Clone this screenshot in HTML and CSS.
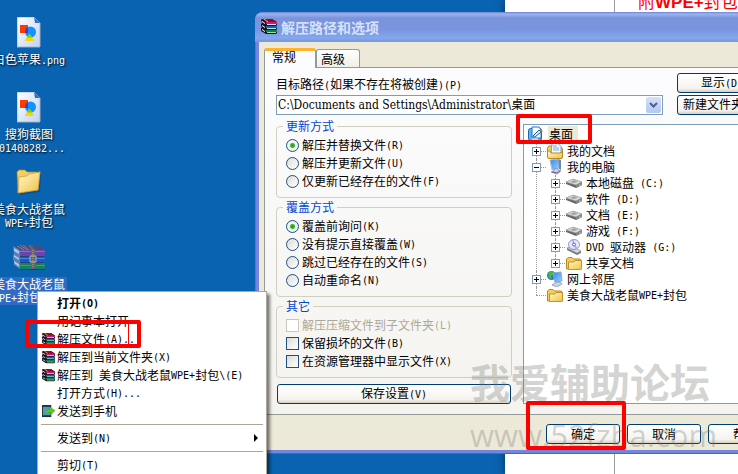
FILE: index.html
```
<!DOCTYPE html>
<html lang="zh-CN">
<head>
    <meta charset="utf-8">
    <meta name="viewport" content="width=device-width, initial-scale=1.0">
    <title>解压路径和选项</title>
    <link rel="stylesheet" href="styles.css">
</head>
<body>

<svg class="defs" aria-hidden="true">
    <defs>
        <linearGradient id="paper" x1="0" y1="0" x2="1" y2="1">
            <stop offset="0" stop-color="#ffffff"/>
            <stop offset="1" stop-color="#bfd3f3"/>
        </linearGradient>
        <linearGradient id="gold" x1="0" y1="0" x2="1" y2="1">
            <stop offset="0" stop-color="#fffbd0"/>
            <stop offset="1" stop-color="#f0c040"/>
        </linearGradient>
        <linearGradient id="screen" x1="0" y1="0" x2="1" y2="1">
            <stop offset="0" stop-color="#2a86f0"/>
            <stop offset="1" stop-color="#9ad4ff"/>
        </linearGradient>
    </defs>
    <symbol id="i-image" viewBox="0 0 24 31">
        <path d="M1 1h16l6 6v23H1z" fill="#0a3d78" opacity=".5" transform="translate(1 1)"/>
        <path d="M0 0h17l6 6v24H0z" fill="url(#paper)" stroke="#9fb6dc"/>
        <path d="M17 0l6 6h-5z" fill="#2f72c4"/>
        <rect x="3" y="8" width="8" height="8" fill="#ff3a00"/>
        <circle cx="13.500" cy="15" r="5.500" fill="#1590ff"/>
        <path d="M8.500 12.500Q9.500 10.500 11 10v6H8.100z" fill="#3a40b8"/>
        <path d="M12.500 16.500l5 7.500h-10z" fill="#ffd500"/>
        <path d="M12.500 16.500l2.700 4h-5.400z" fill="#5ad820"/>
    </symbol>
    <symbol id="i-folder-big" viewBox="0 0 26 26">
        <path d="M3 4h20l2 1-1 18-20 3z" fill="#073f78" opacity=".5"/>
        <path d="M1 3l2-2h6l2 2h10v3l3-4-2 19L2 24z" fill="#f3cf62" stroke="#b08a28" stroke-width=".7"/>
        <path d="M2 24L3 8l8-1 2-2 11-2-2 18z" fill="url(#gold)" stroke="#c09a38" stroke-width=".7"/>
    </symbol>
    <symbol id="i-rar-big" viewBox="0 0 32 25">
        <path d="M0 1l7 4v19l-6-4V16l-1-1V10l1-1z" fill="#5f7fb4"/>
        <path d="M1 0h24l7 5H7z" fill="#4b4c78"/>
        <path d="M1 3l5 3v3L1 6zM1 10l5 3v2l-5-3zM1 16l5 3v3l-5-4z" fill="#a9c8f0"/>
        <path d="M7 5h25v5l-1 1H7z" fill="#6646a6"/>
        <path d="M7 6h25v1H7z" fill="#8e6cc8"/>
        <path d="M7 11h24v2H7z" fill="#2c3f68"/>
        <path d="M7 12h25v5H7z" fill="#1659d2"/>
        <path d="M7 13h25v1H7z" fill="#3f84f0"/>
        <path d="M7 17h24v2H7z" fill="#2e445c"/>
        <path d="M7 18h25v6H7z" fill="#15806a"/>
        <path d="M7 20h25v1H7z" fill="#2aa77c"/>
        <path d="M4 1l7 4M7 0l7 5M10 0l6 5" stroke="#85829a"/>
        <path d="M15 0h3l4 5v19h-4V5z" fill="#66646e"/>
        <path d="M17 11h6v6h-6z" fill="none" stroke="#b0b8c2"/>
        <path d="M20 5v18" stroke="#c0a878" stroke-dasharray="1 1"/>
        <path d="M7 24h25v1H7z" fill="#203d62"/>
    </symbol>
    <symbol id="i-rar" viewBox="0 0 16 16">
        <path d="M0 1l1-1h10l5 3v3l-1 1 1 1v2l-1 1 1 1v2l-1 1H5l-5-3V9l1-1-1-1V5l1-1z" fill="#15151d"/>
        <path d="M1 0h10l4 3H5z" fill="#8c1020"/>
        <path d="M5 3h11v2H5z" fill="#c81c78"/>
        <path d="M6 5h9v1H6z" fill="#f0d8e8"/>
        <path d="M5 7h11v2H5z" fill="#1c5cc0"/>
        <path d="M6 9h9v1H6z" fill="#a0e8f4"/>
        <path d="M5 11h11v2H5z" fill="#108048"/>
        <path d="M6 13h9v1H6z" fill="#90e0a0"/>
        <path d="M1 2l3 2v1L1 3zM1 6l3 2v1L1 7zM1 10l3 2v1l-3-2z" fill="#fff"/>
        <path d="M3 0l4 3" stroke="#d8b64e"/>
    </symbol>
    <symbol id="i-phone" viewBox="0 0 14 14">
        <path d="M0 0h10v13H0z" fill="#20313d"/>
        <path d="M1 2h8v9H1z" fill="#5698cb"/>
        <path d="M3 11c0-5 2-6 5-6V2l6 4-5 5V8c-3 0-4 1-6 3z" fill="#5cc82c" stroke="#369815" stroke-width=".5"/>
    </symbol>
    <symbol id="i-desktop" viewBox="0 0 16 16">
        <rect x=".500" y="2.500" width="13" height="12" rx="2" fill="#60b3f1" stroke="#176bb5"/>
        <path d="M4 1h7l2 3v8H4z" fill="#f5fbff" stroke="#1778ca"/>
        <path d="M5 10l6-6 2 2-6 5H5z" fill="#d9eefc" stroke="#1762a5"/>
        <path d="M12 4l3 1-2 2z" fill="#e66123"/>
        <path d="M4 13h6" stroke="#fff"/>
    </symbol>
    <symbol id="i-docs" viewBox="0 0 16 16">
        <path d="M.500 5l1.500-2h3l1 1h8l1.500 2v8l-1 1.500h-13l-1-1.500z" fill="#f5cf5c" stroke="#b88b20"/>
        <path d="M5 .500h6l3 3V11H4z" fill="#f4faff" stroke="#6f9fd8"/>
        <path d="M6 3h4M6 5h6M6 7h6" stroke="#77aee6"/>
        <path d="M.500 8H3l1 2h9l2.500-1v5l-1 1.500h-13l-1-1.500z" fill="url(#gold)" stroke="#b88b20"/>
    </symbol>
    <symbol id="i-computer" viewBox="0 0 16 16">
        <path d="M3 1l8-1 1 9-7 2z" fill="url(#screen)" stroke="#a8bddb"/>
        <path d="M11 0l3 1v10l-2-1z" fill="#7186bc"/>
        <path d="M7 10l3-1 1 2 3 1-4 3-6-2 3-1z" fill="#c7cfe1" stroke="#7783aa" stroke-width=".7"/>
        <path d="M5 13l5 1 3-2" fill="none" stroke="#6e55a5"/>
    </symbol>
    <symbol id="i-disk" viewBox="0 0 16 16">
        <path d="M0 7l7-3 9 3v3l-6 3-10-4z" fill="#68686c"/>
        <path d="M0 7l7-3 9 3-6 3z" fill="#dcdcdc" stroke="#9a9a9a" stroke-width=".6"/>
        <path d="M4 7l4-2 4 2-4 1z" fill="#a4a4a4"/>
        <path d="M10 10l6-3v3l-6 3z" fill="#85888a"/>
        <path d="M13 10h2" stroke="#a0d090"/>
    </symbol>
    <symbol id="i-dvd" viewBox="0 0 16 16">
        <path d="M1 9l5-2 9 5v2l-4 2-10-5z" fill="#777b83"/>
        <path d="M1 9l5-2 9 5-4 2z" fill="#d7d8db" stroke="#888" stroke-width=".5"/>
        <ellipse cx="8" cy="5.500" rx="5.500" ry="5" fill="#e4e6fa" stroke="#8e9bbb"/>
        <path d="M8 5L5 1l3-1zM8 6l4 3-3 1z" fill="#b9a6ed"/>
        <circle cx="8" cy="5.500" r="1.500" fill="#fff" stroke="#5068c5"/>
    </symbol>
    <symbol id="i-folder" viewBox="0 0 16 16">
        <path d="M.500 4L2 2.500h4L7.500 4H14l1.500 1.500V14H.500z" fill="#f4cc56" stroke="#b88b20"/>
        <path d="M2.500 14.500V7H8l1-1.500h6.500V14l-1 .500z" fill="url(#gold)" stroke="#c3922a"/>
    </symbol>
    <symbol id="i-network" viewBox="0 0 16 16">
        <circle cx="4.500" cy="4.500" r="4.500" fill="#2b74cd"/>
        <path d="M1 2l4-2 2 3-3 2 1 3-3-1z" fill="#49bc37"/>
        <path d="M6 2l8-1 1 9-7 1z" fill="url(#screen)" stroke="#8da9d5"/>
        <path d="M9 11h4l2 2-5 3-5-2z" fill="#cad2e6" stroke="#7e88b1" stroke-width=".7"/>
    </symbol>
</svg>

<div class="desktop">

    <div class="page-window">
        <div class="page-body">附<b>WPE+</b>封包</div>
    </div>

    <ul class="shortcuts">
        <li>
            <span class="pic"><svg width="24" height="31"><use href="#i-image"/></svg></span>
            <span class="name">白色苹果<span class="en">.png</span></span>
        </li>
        <li>
            <span class="pic"><svg width="24" height="31"><use href="#i-image"/></svg></span>
            <span class="name">搜狗截图<br><span class="en">201408282...</span></span>
        </li>
        <li>
            <span class="pic"><svg width="26" height="26"><use href="#i-folder-big"/></svg></span>
            <span class="name">美食大战老鼠<br><span class="en">WPE+</span>封包</span>
        </li>
        <li class="selected">
            <span class="pic"><svg width="32" height="25"><use href="#i-rar-big"/></svg></span>
            <span class="name">美食大战老鼠<br><span class="en">WPE+</span>封包<span class="en">.rar</span></span>
        </li>
    </ul>

    <form class="dialog">
        <div class="titlebar">
            <svg width="16" height="16"><use href="#i-rar"/></svg>
            <h1>解压路径和选项</h1>
        </div>

        <div class="dialog-body">
            <div class="tabs">
                <button type="button" class="tab active">常规</button>
                <button type="button" class="tab">高级</button>
            </div>

            <div class="panel">
                <div class="path-row">
                    <div class="path">
                        <label for="path">目标路径<span class="en">(</span>如果不存在将被创建<span class="en">)(P)</span></label>
                        <div class="combo">
                            <select id="path">
                                <option>C:\Documents and Settings\Administrator\桌面</option>
                            </select>
                            <span class="combo-arrow"><svg width="9" height="6" viewBox="0 0 9 6"><path d="M1 1l3.500 3.500L8 1" fill="none" stroke="#4d6185" stroke-width="2"/></svg></span>
                        </div>
                    </div>
                    <div class="path-buttons">
                        <button type="button" class="btn">显示<span class="en">(D)</span></button>
                        <button type="button" class="btn">新建文件夹<span class="en">(E)</span></button>
                    </div>
                </div>

                <div class="columns">
                    <div class="options">
                        <fieldset>
                            <legend>更新方式</legend>
                            <label><input type="radio" name="update" checked>解压并替换文件<span class="en">(R)</span></label>
                            <label><input type="radio" name="update">解压并更新文件<span class="en">(U)</span></label>
                            <label><input type="radio" name="update">仅更新已经存在的文件<span class="en">(F)</span></label>
                        </fieldset>
                        <fieldset>
                            <legend>覆盖方式</legend>
                            <label><input type="radio" name="overwrite" checked>覆盖前询问<span class="en">(K)</span></label>
                            <label><input type="radio" name="overwrite">没有提示直接覆盖<span class="en">(W)</span></label>
                            <label><input type="radio" name="overwrite">跳过已经存在的文件<span class="en">(S)</span></label>
                            <label><input type="radio" name="overwrite">自动重命名<span class="en">(N)</span></label>
                        </fieldset>
                        <fieldset>
                            <legend>其它</legend>
                            <label class="disabled"><input type="checkbox" disabled>解压压缩文件到子文件夹<span class="en">(L)</span></label>
                            <label><input type="checkbox">保留损坏的文件<span class="en">(B)</span></label>
                            <label><input type="checkbox">在资源管理器中显示文件<span class="en">(X)</span></label>
                        </fieldset>
                        <button type="button" class="btn">保存设置<span class="en">(V)</span></button>
                    </div>

                    <div class="tree">
                        <div class="root"><svg width="16" height="16"><use href="#i-desktop"/></svg><span class="current">桌面</span></div>
                        <ul>
                            <li>
                                <div class="node"><button type="button" class="toggle plus" aria-label="展开"></button><svg width="16" height="16"><use href="#i-docs"/></svg>我的文档</div>
                            </li>
                            <li>
                                <div class="node"><button type="button" class="toggle" aria-label="折叠"></button><svg width="16" height="16"><use href="#i-computer"/></svg>我的电脑</div>
                                <ul>
                                    <li><div class="node"><button type="button" class="toggle plus" aria-label="展开"></button><svg width="16" height="16"><use href="#i-disk"/></svg>本地磁盘<span class="en"> (C:)</span></div></li>
                                    <li><div class="node"><button type="button" class="toggle plus" aria-label="展开"></button><svg width="16" height="16"><use href="#i-disk"/></svg>软件<span class="en"> (D:)</span></div></li>
                                    <li><div class="node"><button type="button" class="toggle plus" aria-label="展开"></button><svg width="16" height="16"><use href="#i-disk"/></svg>文档<span class="en"> (E:)</span></div></li>
                                    <li><div class="node"><button type="button" class="toggle plus" aria-label="展开"></button><svg width="16" height="16"><use href="#i-disk"/></svg>游戏<span class="en"> (F:)</span></div></li>
                                    <li><div class="node"><button type="button" class="toggle plus" aria-label="展开"></button><svg width="16" height="16"><use href="#i-dvd"/></svg><span class="en">DVD </span>驱动器<span class="en"> (G:)</span></div></li>
                                    <li><div class="node"><button type="button" class="toggle plus" aria-label="展开"></button><svg width="16" height="16"><use href="#i-folder"/></svg>共享文档</div></li>
                                </ul>
                            </li>
                            <li>
                                <div class="node"><button type="button" class="toggle plus" aria-label="展开"></button><svg width="16" height="16"><use href="#i-network"/></svg>网上邻居</div>
                            </li>
                            <li>
                                <div class="node leaf"><svg width="16" height="16"><use href="#i-folder"/></svg>美食大战老鼠<span class="en">WPE+</span>封包</div>
                            </li>
                        </ul>
                    </div>
                </div>
            </div>

            <div class="footer">
                <button type="button" class="btn">确定</button>
                <button type="button" class="btn">取消</button>
                <button type="button" class="btn">帮助</button>
            </div>
        </div>
    </form>

    <div class="watermark">
        <div class="wm-name">我爱辅助论坛</div>
        <div class="wm-url">www.52fzba.com</div>
    </div>

    <div class="menu">
        <button type="button" class="default">打开<span class="en">(O)</span></button>
        <button type="button">用记事本打开</button>
        <button type="button"><svg width="13" height="13"><use href="#i-rar"/></svg>解压文件<span class="en">(A)...</span></button>
        <button type="button"><svg width="13" height="13"><use href="#i-rar"/></svg>解压到当前文件夹<span class="en">(X)</span></button>
        <button type="button"><svg width="13" height="13"><use href="#i-rar"/></svg>解压到<span class="en"> </span>美食大战老鼠<span class="en">WPE+</span>封包<span class="en">\(E)</span></button>
        <button type="button">打开方式<span class="en">(H)...</span></button>
        <button type="button"><svg width="13" height="13"><use href="#i-phone"/></svg>发送到手机</button>
        <hr>
        <button type="button" class="submenu">发送到<span class="en">(N)</span></button>
        <hr>
        <button type="button">剪切<span class="en">(T)</span></button>
    </div>

    <div class="mark mark-menu"></div>
    <div class="mark mark-tree"></div>
    <div class="mark mark-ok"></div>

</div>

</body>
</html>
```
FILE: styles.css
```
* {
    box-sizing: border-box;
}

body {
    margin: 0;
    font-family: "Noto Sans CJK SC", sans-serif;
    font-size: 12px;
    line-height: 16px;
    color: #000;
}

ul {
    list-style: none;
    margin: 0;
    padding: 0;
}

svg {
    flex: none;
}

button, select {
    font: inherit;
    color: inherit;
}

.defs {
    position: absolute;
    width: 0;
    height: 0;
}

/* latin text is half the width of a chinese character */
.en {
    padding-top: 2px;
    font-family: "DejaVu Sans Mono", monospace;
    font-size: 10px;
    white-space: pre;
}

.desktop {
    position: relative;
    height: 100vh;
    overflow: hidden;
    background-color: #0963b0;
}

/* browser page behind the dialog */
.page-window {
    position: absolute;
    top: 0;
    bottom: 0;
    left: 505px;
    right: 0;
    padding-left: 109px;
    background-color: #fff;
    box-shadow: 0 0 8px rgba(0, 0, 0, 0.5);
}

.page-body {
    height: 100%;
    padding-left: 23px;
    border-left: 1px solid #999;
    color: #f00;
    font-family: "Liberation Sans", "Noto Sans CJK SC", sans-serif;
    font-size: 17px;
    line-height: 6px;
    white-space: nowrap;
}

/* desktop icons */
.shortcuts {
    position: absolute;
    top: 14px;
    left: -8px;
    width: 74px;
}

.shortcuts li {
    display: flex;
    flex-direction: column;
    align-items: center;
    height: 75px;
    color: #fff;
    text-align: center;
    line-height: 13px;
    text-shadow: 1px 1px 2px #000;
}

.pic {
    display: flex;
    align-items: center;
    height: 36px;
}

.name {
    margin-top: 2px;
    white-space: nowrap;
}

.selected .name {
    padding: 0 2px;
    background-color: #316ac5;
    text-shadow: none;
}

/* dialog */
.dialog {
    position: absolute;
    top: 12px;
    left: 255px;
    right: -65px;
    padding: 0 4px 4px;
    border-radius: 8px 8px 0 0;
    background-color: #7584dc;
    box-shadow: inset 1px 0 #6570c8, inset 0 -1px #5560b8;
}

.titlebar {
    display: flex;
    align-items: center;
    gap: 4px;
    height: 30px;
    margin: 0 -4px;
    padding: 0 6px;
    border-radius: 8px 8px 0 0;
    background: linear-gradient(#6c82d4 0, #9db5ef 2px, #7b93dd 6px, #7a95df 18px, #84a8ec 26px, #7b93dd 30px);
}

.titlebar h1 {
    margin: 0;
    font-size: 14px;
    color: #d5e2fa;
}

.dialog-body {
    padding: 5px 5px 6px;
    background-color: #ece9d8;
}

.tabs {
    display: flex;
    align-items: flex-end;
    height: 20px;
}

.tab {
    width: 44px;
    height: 18px;
    padding: 0 4px;
    border: 1px solid #919b9c;
    border-bottom: 0;
    border-radius: 3px 3px 0 0;
    background: linear-gradient(#fff, #f0efe7);
    text-align: left;
    line-height: 16px;
}

.tab.active {
    position: relative;
    width: 52px;
    height: 20px;
    margin-bottom: -1px;
    padding: 0 7px 5px;
    border-top: 3px solid #ffb32c;
    background: #fcfcfe;
    line-height: 12px;
}

.panel {
    padding: 5px 11px 10px;
    border: 1px solid #919b9c;
    background: linear-gradient(#fcfcfe, #f4f3ee);
}

.path-row {
    display: flex;
    align-items: flex-end;
    gap: 14px;
    padding-right: 15px;
}

.path {
    flex: 1;
}

.path label {
    display: block;
    line-height: 18px;
}

.combo {
    position: relative;
}

.combo select {
    display: block;
    width: 100%;
    height: 20px;
    padding: 0 20px 0 1px;
    border: 1px solid #7f9db9;
    border-radius: 0;
    background-color: #fff;
    appearance: none;
    font-family: "DejaVu Serif Condensed", "Noto Sans CJK SC", serif;
}

.combo-arrow {
    position: absolute;
    top: 2px;
    right: 2px;
    display: flex;
    align-items: center;
    justify-content: center;
    width: 15px;
    height: 16px;
    border-radius: 2px;
    background: linear-gradient(#d4e0fc, #b4c8f4);
    pointer-events: none;
}

.path-buttons {
    display: flex;
    flex-direction: column;
    gap: 2px;
    width: 90px;
}

.btn {
    height: 20px;
    padding: 0;
    border: 1px solid #003c74;
    border-radius: 3px;
    background: linear-gradient(#fff, #f4f3ee 80%, #d6d0c5);
    line-height: 16px;
    white-space: nowrap;
}

.columns {
    display: grid;
    grid-template-columns: 236px 1fr;
    gap: 11px;
    margin-top: 3px;
}

.options {
    display: flex;
    flex-direction: column;
    gap: 1px;
}

fieldset {
    min-width: 0;
    margin: 0;
    padding: 2px 9px 7px;
    border: 1px solid #d0d0bf;
    border-radius: 4px;
}

legend {
    margin-left: -3px;
    padding: 0 3px;
    color: #0046d5;
}

fieldset label {
    display: flex;
    align-items: center;
    height: 18px;
    white-space: nowrap;
}

fieldset input {
    width: 13px;
    height: 13px;
    margin: 0 3px 0 0;
    border: 1px solid #1c5180;
    background: linear-gradient(135deg, #dcdcd7, #fff);
    appearance: none;
}

fieldset input[type="radio"] {
    border-radius: 50%;
}

fieldset input[type="radio"]:checked {
    background: radial-gradient(circle, #21a121 0, #35b535 2px, #f1f1ed 3px);
}

.disabled {
    color: #aca899;
}

.disabled input {
    border-color: #cac8bb;
    background: #fff;
}

.options .btn {
    margin: 5px 1px 0;
}

/* folder tree */
.tree {
    margin-top: 6px;
    border: 1px solid #7f9db9;
    background-color: #fff;
    white-space: nowrap;
}

.root {
    display: flex;
    align-items: center;
    gap: 4px;
    height: 18px;
    padding-left: 4px;
}

.current {
    padding: 0 5px 0 1px;
    background-color: #ece9d8;
}

.node {
    position: relative;
    display: flex;
    align-items: center;
    height: 16px;
    padding-left: 8px;
}

.node svg {
    margin: 0 4px 0 6px;
}

.node.leaf svg {
    margin-left: 15px;
}

.node::before {
    content: "";
    position: absolute;
    top: 8px;
    left: 12px;
    width: 10px;
    border-top: 1px dotted #999;
}

.tree li {
    position: relative;
}

.tree li::before {
    content: "";
    position: absolute;
    top: 0;
    bottom: 0;
    left: 12px;
    border-left: 1px dotted #999;
}

.tree li:last-child::before {
    bottom: auto;
    height: 8px;
}

.tree li ul {
    padding-left: 19px;
}

.toggle {
    position: relative;
    width: 9px;
    height: 9px;
    padding: 0;
    border: 1px solid #7f9db9;
    background: linear-gradient(#000, #000) center / 5px 1px no-repeat, #fff;
}

.toggle.plus {
    background: linear-gradient(#000, #000) center / 5px 1px no-repeat, linear-gradient(#000, #000) center / 1px 5px no-repeat, #fff;
}

.footer {
    display: flex;
    justify-content: flex-end;
    gap: 7px;
    padding: 9px 12px 0 0;
}

.footer .btn {
    width: 74px;
}

/* context menu */
.menu {
    position: absolute;
    top: 291px;
    left: 37px;
    width: 230px;
    padding: 2px 3px;
    border: 1px solid #aca899;
    background-color: #fff;
    box-shadow: 3px 3px 3px rgba(0, 0, 0, 0.5);
}

.menu button {
    position: relative;
    display: flex;
    align-items: center;
    width: 100%;
    height: 18px;
    padding: 0 0 0 16px;
    border: 0;
    background: none;
    white-space: nowrap;
}

.menu svg {
    margin: 0 2px 0 -15px;
}

.menu .default {
    font-weight: bold;
}

.menu hr {
    height: 1px;
    margin: 4px 0;
    border: 0;
    background-color: #aca899;
}

.submenu::after {
    content: "";
    margin-left: auto;
    margin-right: 5px;
    border: 4px solid transparent;
    border-left-color: #000;
    border-right: 0;
}

/* forum watermark */
.watermark {
    position: absolute;
    top: 359px;
    left: 470px;
    color: rgba(120, 120, 115, 0.32);
    pointer-events: none;
    white-space: nowrap;
}

.wm-name {
    font-size: 40px;
    font-weight: bold;
    line-height: 44px;
}

.wm-url {
    font-family: "Open Sans", sans-serif;
    font-size: 31px;
    line-height: 64px;
}

/* red highlight boxes */
.mark {
    position: absolute;
    border: 4px solid #f00;
    border-radius: 2px;
    pointer-events: none;
}

.mark-menu {
    top: 320px;
    left: 25px;
    width: 116px;
    height: 28px;
}

.mark-menu::after {
    content: "";
    position: absolute;
    top: 0;
    bottom: 0;
    right: 8px;
    border-left: 1px solid #f00;
}

.mark-tree {
    top: 114px;
    left: 516px;
    width: 76px;
    height: 30px;
}

.mark-ok {
    top: 401px;
    left: 526px;
    width: 100px;
    height: 49px;
}
```
